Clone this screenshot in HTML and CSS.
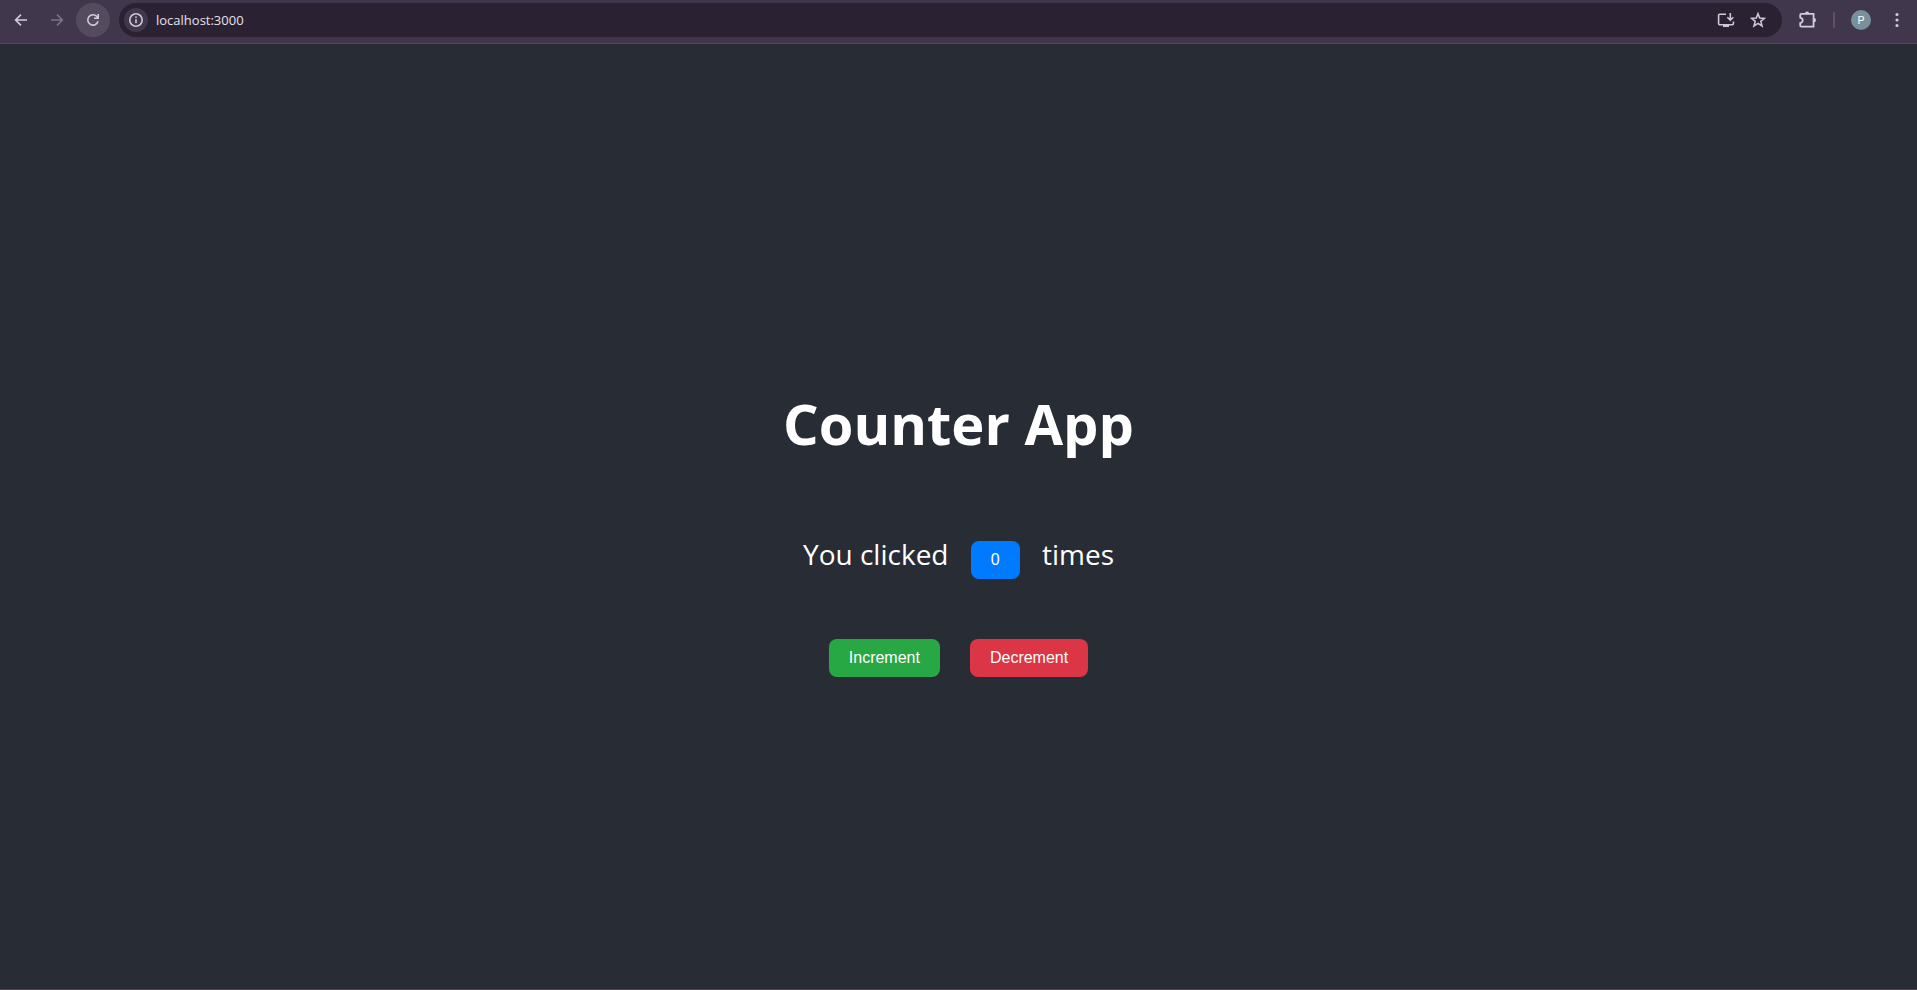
FILE: index.html
```html
<!DOCTYPE html>
<html lang="en">
<head>
<meta charset="utf-8">
<title>Counter App</title>
<link rel="stylesheet" href="styles.css">
</head>
<body>
<header class="toolbar">
  <nav class="nav">
    <button class="tool" aria-label="Back"><svg class="icon" viewBox="0 0 16 16"><path d="M14 8H3M8 2.6 2.6 8 8 13.4"/></svg></button>
    <button class="tool tool-off" aria-label="Forward" disabled><svg class="icon" viewBox="0 0 16 16"><path d="M2 8h11M8 2.6 13.4 8 8 13.4"/></svg></button>
    <button class="tool tool-hover" aria-label="Reload"><svg class="icon" viewBox="0 0 16 16"><path d="M13 9.2A5.2 5.2 0 1 1 12.2 4.900L13 5.900M13.200 2v4.300H9"/></svg></button>
  </nav>
  <div class="omnibox">
    <button class="site" aria-label="Site information"><svg class="icon" viewBox="0 0 16 16"><circle cx="8" cy="8" r="6.200"/><path d="M8 7.300v4M8 4.600v1.500"/></svg></button>
    <input class="url" aria-label="Address" value="localhost:3000">
    <button class="action" aria-label="Install app"><svg class="icon" viewBox="0 0 18 16"><path d="M9 2.200H2.600a1 1 0 0 0-1 1v8.600a1 1 0 0 0 1 1h12.800a1 1 0 0 0 1-1V9.500M13.300 1v7M10.300 5.200l3 3 3-3"/><path class="solid" d="M6 12.500h6v2.500H6z"/></svg></button>
    <button class="action" aria-label="Bookmark"><svg class="icon" viewBox="0 0 16 16"><path d="m8 1.800 1.700 4.300 4.700.3-3.600 3 1.200 4.500L8 11.400l-4 2.500 1.200-4.500-3.600-3 4.700-.3z"/></svg></button>
  </div>
  <div class="tools">
    <button class="tool" aria-label="Extensions"><svg class="icon" viewBox="0 0 18 18"><path d="M3 3.500h11v11.500H3a1 1 0 0 1-1-1v-2.300c3-.6 3-4.300 0-4.900V4.500a1 1 0 0 1 1-1z"/><path class="solid" d="M6.200 3.200a1.900 1.900 0 0 1 3.800 0zM14.300 7.300a1.900 1.900 0 0 1 0 3.800z"/></svg></button>
    <span class="divider"></span>
    <button class="profile" aria-label="Profile">P</button>
    <button class="more" aria-label="Menu"><svg class="icon" viewBox="0 0 16 16"><path class="solid" d="M6.400 2.500a1.600 1.600 0 1 0 3.200 0 1.600 1.600 0 1 0-3.200 0M6.400 8a1.600 1.600 0 1 0 3.200 0 1.600 1.600 0 1 0-3.200 0M6.400 13.500a1.600 1.600 0 1 0 3.200 0 1.600 1.600 0 1 0-3.200 0"/></svg></button>
  </div>
</header>
<main class="app">
  <h1 class="title">Counter App</h1>
  <p class="status">You clicked <button class="btn btn-count">0</button> times</p>
  <div class="actions">
    <button class="btn btn-inc">Increment</button>
    <button class="btn btn-dec">Decrement</button>
  </div>
</main>
</body>
</html>
```
FILE: styles.css
```css
* { box-sizing: border-box; }
body {
  margin: 0;
  min-height: 100vh;
  display: flex;
  flex-direction: column;
  background: #282c34;
  border-bottom: 1px solid #4a444c;
  color: #fff;
  font-family: "Segoe UI", "Open Sans", "Noto Sans", sans-serif;
}
button { border: 0; padding: 0; font: inherit; color: inherit; background: none; }
.toolbar {
  display: flex;
  align-items: center;
  gap: 9px;
  padding: 3px 8px 6px 4px;
  background: #40374c;
  border-bottom: 1px solid #504b56;
  color: #d5c9e4;
}
.nav, .tools { display: flex; align-items: center; }
.nav { gap: 2px; }
.tool, .site, .action, .profile, .more {
  display: flex;
  align-items: center;
  justify-content: center;
  flex: none;
  border-radius: 50%;
}
.tool { width: 34px; height: 34px; }
.tool-off { color: #7b7188; }
.tool-hover { background: #544b5f; }
.icon { height: 16px; fill: none; stroke: currentColor; stroke-width: 1.6; }
.tools .tool .icon { height: 20px; }
.solid { fill: currentColor; stroke: none; }
.omnibox {
  flex: 1;
  display: flex;
  align-items: center;
  height: 34px;
  padding: 0 8px 0 5px;
  border-radius: 17px;
  background: #2a2233;
  color: #cfc8d6;
}
.site { width: 24px; height: 24px; background: #40374c; }
.url {
  flex: 1;
  min-width: 0;
  padding: 0 8px;
  border: 0;
  outline: 0;
  background: none;
  color: #e6e0ec;
  font: 13px "Segoe UI", "Open Sans", sans-serif;
}
.action { width: 32px; height: 32px; }
.divider { width: 2px; height: 16px; margin: 0 16px 0 8px; background: #5b5268; }
.profile {
  width: 20px;
  height: 20px;
  background: #78909c;
  color: #fff;
  font: 11px Roboto, sans-serif;
}
.more { width: 24px; height: 34px; margin-left: 14px; }
.app {
  flex: 1;
  display: flex;
  flex-direction: column;
  align-items: center;
  justify-content: center;
  padding-top: 26px;
}
.title { margin: 0 0 64px; font-size: 56px; line-height: 80px; font-weight: 700; }
.status { margin: 0 0 58px; font-size: 28px; line-height: 54px; }
.actions { display: flex; gap: 30px; }
.btn {
  padding: 10px 20px;
  border-radius: 8px;
  font: 16px/18px Arial, "Liberation Sans", sans-serif;
  color: #fff;
}
.btn-count { margin: 0 15px; background: #007bff; }
.btn-inc { background: #28a745; }
.btn-dec { background: #dc3545; }
```
